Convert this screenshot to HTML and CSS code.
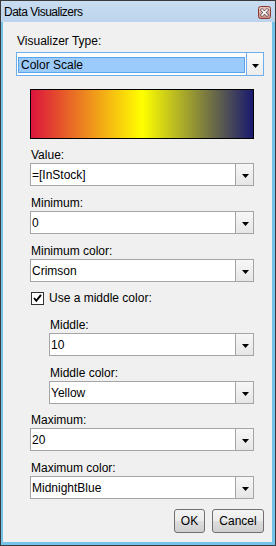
FILE: index.html
```html
<!DOCTYPE html>
<html>
<head>
<meta charset="utf-8">
<link rel="stylesheet" href="styles.css">
</head>
<body>
<div class="window">
  <div class="titlebar">
    <span class="title">Data Visualizers</span>
    <span class="close">
      <svg width="13" height="13" viewBox="0 0 13 13">
        <defs>
          <linearGradient id="cg" x1="0" y1="0" x2="0" y2="1">
            <stop offset="0" stop-color="#e9c7c2"/>
            <stop offset="1" stop-color="#c98a82"/>
          </linearGradient>
        </defs>
        <rect x="0.5" y="0.5" width="12" height="12" rx="2" fill="url(#cg)" stroke="#8a3b33"/>
        <path d="M4 4 L9 9 M9 4 L4 9" stroke="#5a4a4a" stroke-width="3" stroke-linecap="square"/>
        <path d="M4 4 L9 9 M9 4 L4 9" stroke="#ffffff" stroke-width="1.6" stroke-linecap="square"/>
      </svg>
    </span>
  </div>
  <div class="content">
    <div class="label first">Visualizer Type:</div>
    <div class="combo focused">
      <div class="value"><span class="hl">Color Scale</span></div>
      <div class="btn"><svg width="7" height="4" viewBox="0 0 7 4"><polygon points="0,0 7,0 3.5,4" fill="#000"/></svg></div>
    </div>

    <div class="section">
      <div class="gradient"></div>

      <div class="field f-value">
        <div class="label">Value:</div>
        <div class="combo"><div class="value">=[InStock]</div><div class="btn"><svg width="7" height="4" viewBox="0 0 7 4"><polygon points="0,0 7,0 3.5,4" fill="#000"/></svg></div></div>
      </div>
      <div class="field">
        <div class="label">Minimum:</div>
        <div class="combo"><div class="value">0</div><div class="btn"><svg width="7" height="4" viewBox="0 0 7 4"><polygon points="0,0 7,0 3.5,4" fill="#000"/></svg></div></div>
      </div>
      <div class="field">
        <div class="label">Minimum color:</div>
        <div class="combo"><div class="value">Crimson</div><div class="btn"><svg width="7" height="4" viewBox="0 0 7 4"><polygon points="0,0 7,0 3.5,4" fill="#000"/></svg></div></div>
      </div>

      <div class="check">
        <span class="box"><svg width="11" height="11" viewBox="0 0 11 11"><polyline points="2,5 4.3,7.8 9,1.8" fill="none" stroke="#000" stroke-width="1.9"/></svg></span>
        <span class="check-label">Use a middle color:</span>
      </div>

      <div class="sub">
        <div class="field">
          <div class="label">Middle:</div>
          <div class="combo"><div class="value">10</div><div class="btn"><svg width="7" height="4" viewBox="0 0 7 4"><polygon points="0,0 7,0 3.5,4" fill="#000"/></svg></div></div>
        </div>
        <div class="field">
          <div class="label">Middle color:</div>
          <div class="combo"><div class="value">Yellow</div><div class="btn"><svg width="7" height="4" viewBox="0 0 7 4"><polygon points="0,0 7,0 3.5,4" fill="#000"/></svg></div></div>
        </div>
      </div>

      <div class="field f-max">
        <div class="label">Maximum:</div>
        <div class="combo"><div class="value">20</div><div class="btn"><svg width="7" height="4" viewBox="0 0 7 4"><polygon points="0,0 7,0 3.5,4" fill="#000"/></svg></div></div>
      </div>
      <div class="field">
        <div class="label">Maximum color:</div>
        <div class="combo"><div class="value">MidnightBlue</div><div class="btn"><svg width="7" height="4" viewBox="0 0 7 4"><polygon points="0,0 7,0 3.5,4" fill="#000"/></svg></div></div>
      </div>
    </div>

    <div class="buttons">
      <button class="button ok">OK</button>
      <button class="button cancel">Cancel</button>
    </div>
  </div>
</div>
</body>
</html>
```

FILE: styles.css
```css
* { box-sizing: border-box; }
html, body { margin: 0; padding: 0; }
body {
  font-family: "Liberation Sans", Arial, sans-serif;
  font-size: 12px;
  color: #000;
  background: #fff;
}
.window {
  width: 276px;
  height: 546px;
  border: 1px solid #3a3a3a;
  background: #74c2ea;
  display: flex;
  flex-direction: column;
}
.titlebar {
  height: 21px;
  flex: none;
  display: flex;
  align-items: flex-start;
  justify-content: space-between;
  background: linear-gradient(#c9ddf1, #bcd4ec);
  padding: 0 4px 0 3px;
}
.title {
  font-size: 12px;
  letter-spacing: -0.5px;
  line-height: 14px;
  padding-top: 4px;
}
.close {
  display: block;
  width: 13px;
  height: 13px;
  margin-top: 5px;
}
.close svg { display: block; }
.content {
  flex: 1;
  margin: 0 3px 3px 2px;
  background: #f0f0f0;
  padding: 12px 8px 0 13px;
  display: flex;
  flex-direction: column;
}
.label {
  line-height: 14px;
  height: 14px;
  padding-left: 1px;
  white-space: nowrap;
}
.combo {
  height: 23px;
  margin-top: 1px;
  border: 1px solid #a5a5a5;
  background: #fff;
  display: flex;
}
.combo .value {
  flex: 1;
  padding: 2px 0 0 1px;
  line-height: 19px;
  white-space: nowrap;
  overflow: hidden;
}
.combo .btn {
  width: 18px;
  flex: none;
  border-left: 1px solid #a5a5a5;
  background: linear-gradient(#f7f7f7, #e6e6e6);
  display: flex;
  align-items: center;
  justify-content: center;
  padding-top: 3px;
  padding-left: 1px;
}
.combo .btn svg { display: block; }
.combo.focused {
  height: 24px;
  margin-top: 4px;
  border-color: #6eaeee;
}
.combo.focused .value {
  padding: 4px 1px 2px 1px;
  line-height: 14px;
}
.combo.focused .hl {
  display: block;
  height: 16px;
  background: #9bcbfb;
  border: 1px solid #5ba4ec;
  padding-left: 2px;
  line-height: 14px;
}
.combo.focused .btn {
  border-left-color: #6eaeee;
  width: 17px;
  background: linear-gradient(#fbfbfb, #ececec);
}
.section {
  margin: 13px 10px 0 14px;
  display: flex;
  flex-direction: column;
}
.gradient {
  height: 50px;
  border: 1px solid #000;
  background: linear-gradient(to right, #dc143c, #ffff00, #191970);
}
.field { margin-top: 10px; }
.f-value { margin-top: 9px; }
.f-max { margin-top: 9px; }
.check {
  margin-top: 9px;
  display: flex;
  align-items: center;
  height: 14px;
  padding-left: 1px;
}
.check .box {
  width: 13px;
  height: 13px;
  border: 1px solid #333;
  background: #fff;
  display: block;
}
.check .box svg { display: block; }
.check-label {
  margin-left: 5px;
  line-height: 14px;
}
.sub {
  margin-left: 19px;
  margin-top: 3px;
}
.buttons {
  margin-top: 10px;
  display: flex;
  justify-content: flex-end;
  gap: 7px;
}
.button {
  height: 24px;
  font-family: "Liberation Sans", Arial, sans-serif;
  font-size: 12px;
  color: #000;
  border: 1px solid #707070;
  border-radius: 3px;
  background: linear-gradient(#f4f4f4 0%, #ebebeb 50%, #dddddd 51%, #cfcfcf 100%);
  padding: 0;
  line-height: 20px;
}
.ok { width: 31px; }
.cancel { width: 52px; }
```
